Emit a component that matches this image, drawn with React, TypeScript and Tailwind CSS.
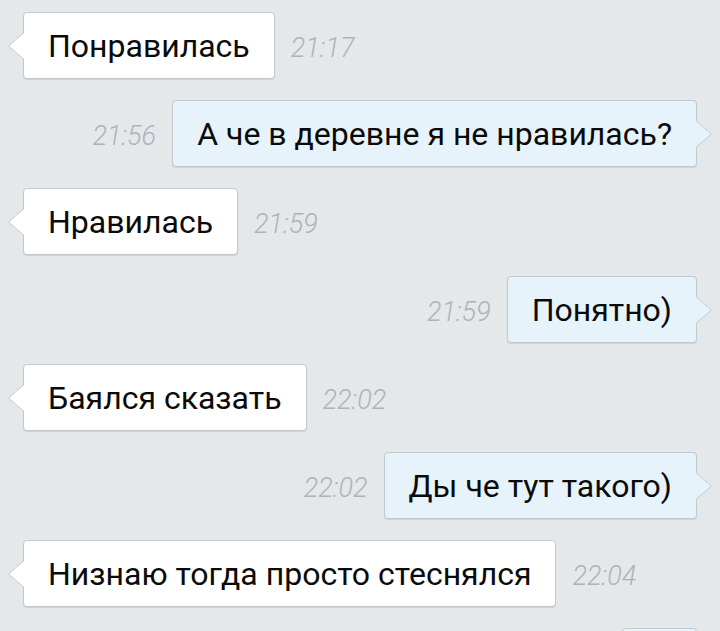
type Msg = { text: string; time: string; out: boolean; w?: string };

const messages: Msg[] = [
  { text: "Понравилась", time: "21:17", out: false },
  { text: "А че в деревне я не нравилась?", time: "21:56", out: true },
  { text: "Нравилась", time: "21:59", out: false },
  { text: "Понятно)", time: "21:59", out: true },
  { text: "Баялся сказать", time: "22:02", out: false },
  { text: "Ды че тут такого)", time: "22:02", out: true },
  { text: "Низнаю тогда просто стеснялся", time: "22:04", out: false },
  // next message, only its top edge is on screen
  { text: "", time: "", out: true, w: "w-[75px]" },
];

function Tail({ out }: { out: boolean }) {
  const fill = out ? "#e7f3fa" : "#ffffff";
  if (out) {
    return (
      <svg
        width="17"
        height="28"
        viewBox="0 0 17 28"
        className="absolute right-[-16px] top-1/2 -translate-y-1/2"
      >
        <polygon points="1.5,1 16.5,14 1.5,27" fill={fill} stroke="#c3c9ce" strokeWidth="1" />
        <rect x="0" y="1.6" width="2" height="24.8" fill={fill} />
      </svg>
    );
  }
  return (
    <svg
      width="17"
      height="28"
      viewBox="0 0 17 28"
      className="absolute left-[-16px] top-1/2 -translate-y-1/2"
    >
      <polygon points="15.5,1 0.5,14 15.5,27" fill={fill} stroke="#c3c9ce" strokeWidth="1" />
      <rect x="15" y="1.6" width="2" height="24.8" fill={fill} />
    </svg>
  );
}

function Bubble({ m }: { m: Msg }) {
  const bubble = (
    <div
      className={`relative flex h-[67px] shrink-0 items-center rounded-[4px] border border-[#c3c9ce] px-[24px] text-[32px] text-[#0a0a0a] shadow-[0_1px_1px_rgba(0,0,0,0.10)] ${
        m.out ? "bg-[#e7f3fa]" : "bg-white"
      } ${m.w ?? ""}`}
    >
      <Tail out={m.out} />
      {m.text && <span className="whitespace-nowrap leading-none">{m.text}</span>}
    </div>
  );
  const time = m.time ? (
    <span className="translate-y-[3px] whitespace-nowrap text-[27px] font-light italic text-[#adb3b8]">
      {m.time}
    </span>
  ) : null;
  return (
    <div className={`flex items-center gap-[16px] ${m.out ? "justify-end" : "justify-start"}`}>
      {m.out ? (
        <>
          {time}
          {bubble}
        </>
      ) : (
        <>
          {bubble}
          {time}
        </>
      )}
    </div>
  );
}

export default function App() {
  return (
    <main
      className="h-[631px] w-[720px] overflow-hidden bg-[#e4e8eb] px-[23px] pt-[12px]"
      style={{ fontFamily: "Roboto, 'Liberation Sans', sans-serif" }}
    >
      <div className="flex flex-col gap-[21px]">
        {messages.map((m, i) => (
          <Bubble key={i} m={m} />
        ))}
      </div>
    </main>
  );
}
